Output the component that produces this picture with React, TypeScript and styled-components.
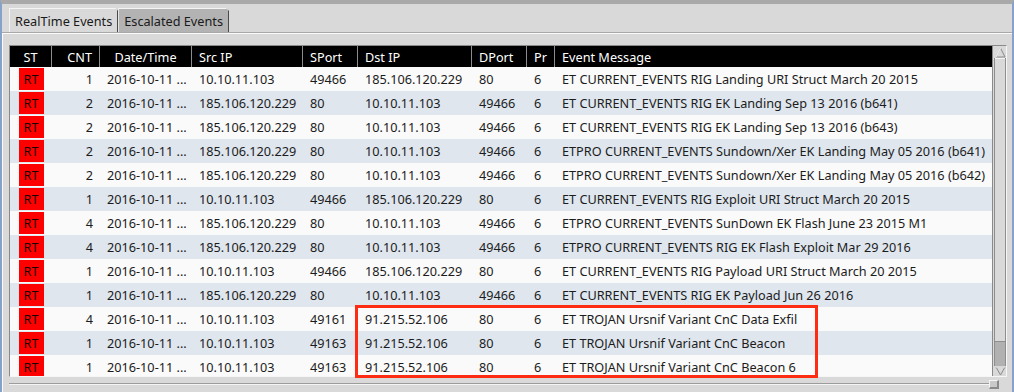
import React, { FunctionComponent } from 'react'
import styled, { createGlobalStyle } from 'styled-components'

const GlobalStyle = createGlobalStyle`
  html, body {
    margin: 0;
    padding: 0;
    background: #d9d9d9;
  }
  body {
    font-family: 'Noto Sans', 'DejaVu Sans', sans-serif;
    font-size: 12.7px;
    color: #1c1c1c;
  }
`

// column widths for header and rows, in px (last one fills)
const COLUMNS = '42px 48px 92px 111px 55px 114px 55px 28px 1fr'

const Window = styled.div`
  position: relative;
  width: 1014px;
  height: 392px;
  box-sizing: border-box;
  border-top: 4px solid #a9a9a9;
  border-left: 2px solid #86a2c8;
  border-right: 2px solid #86a2c8;
  background: #d9d9d9;
  display: flex;
  flex-direction: column;
  overflow: hidden;
`

const TabBar = styled.div`
  height: 30px;
  box-sizing: border-box;
  display: flex;
  align-items: flex-end;
  padding-left: 7px;
  border-bottom: 1px solid #a8a8a8;
`

const Tab = styled.div<{ $active?: boolean }>`
  height: 24px;
  box-sizing: border-box;
  display: flex;
  align-items: center;
  padding: 0 5px 0 5px;
  border-top: 1px solid #f4f4f4;
  border-left: 1px solid #f4f4f4;
  border-right: 1px solid #4a4a4a;
  background: ${p => (p.$active ? '#d9d9d9' : '#b3b3b3')};
  color: #1a1a1a;
  white-space: nowrap;
  clip-path: polygon(0 0, calc(100% - 3px) 0, 100% 3px, 100% 100%, 0 100%);
`

const Panel = styled.div`
  flex: 1;
  display: flex;
  flex-direction: column;
  border-top: 1px solid #fbfbfb;
  border-left: 1px solid #fbfbfb;
  padding: 11px 5px 0 6px;
`

const Frame = styled.div`
  position: relative;
  display: flex;
  height: 332px;
  box-sizing: border-box;
  border-top: 1px solid #8a8a8a;
  border-left: 1px solid #8a8a8a;
  border-right: 1px solid #f6f6f6;
  border-bottom: 1px solid #f6f6f6;
`

const Viewport = styled.div`
  flex: 1;
  overflow: hidden;
  background: #fafafa;
`

const HeaderRow = styled.div`
  display: grid;
  grid-template-columns: ${COLUMNS};
  height: 21px;
  background: #000;
  color: #fff;
`

const HeaderCell = styled.div<{ $align?: 'left' | 'center' | 'right' }>`
  display: flex;
  align-items: center;
  justify-content: ${p => (p.$align === 'center' ? 'center' : p.$align === 'right' ? 'flex-end' : 'flex-start')};
  padding: 0 7px;
  border-right: 1px solid #8c8c8c;
  white-space: nowrap;
  overflow: hidden;
  &:last-child {
    border-right: none;
  }
`

const Row = styled.div<{ $odd: boolean }>`
  display: grid;
  grid-template-columns: ${COLUMNS};
  height: 24px;
  background: ${p => (p.$odd ? '#dfe6ee' : '#fafafa')};
`

const Cell = styled.div<{ $align?: 'left' | 'center' | 'right' }>`
  display: flex;
  align-items: center;
  justify-content: ${p => (p.$align === 'center' ? 'center' : p.$align === 'right' ? 'flex-end' : 'flex-start')};
  padding: 0 7px;
  white-space: nowrap;
  overflow: hidden;
`

const StatusBadge = styled.div`
  width: 25px;
  height: 22px;
  background: #ff0000;
  color: #1a0000;
  display: flex;
  align-items: center;
  justify-content: center;
`

// vertical scrollbar at the right of the table
const VScroll = styled.div`
  width: 14px;
  box-sizing: border-box;
  display: flex;
  flex-direction: column;
  border-left: 1px solid #8a8a8a;
  padding-left: 1px;
  background: #d9d9d9;
`

const ArrowButton = styled.div<{ $h: number }>`
  height: ${p => p.$h}px;
  display: flex;
  align-items: center;
  justify-content: center;
`

const Track = styled.div`
  flex: 1;
  display: flex;
  flex-direction: column;
  border-left: 1px solid #8e8e8e;
  border-right: 1px solid #8e8e8e;
  width: 12px;
  box-sizing: border-box;
  background: #b1b1b1;
`

const Thumb = styled.div`
  height: 284px;
  background: #d9d9d9;
  border-top: 1px solid #f4f4f4;
  border-bottom: 1px solid #8e8e8e;
  box-sizing: border-box;
`

// horizontal scrollbar, mostly below the window edge
const HScroll = styled.div`
  flex: 1;
  display: flex;
  align-items: flex-start;
  padding-top: 3px;
`

const HTrack = styled.div`
  flex: 1;
  margin-top: 3px;
  border-top: 1px solid #9c9c9c;
  box-shadow: inset 0 1px 0 #f4f4f4;
  height: 8px;
`

const HButton = styled.div`
  width: 10px;
  height: 9px;
  margin-right: 8px;
  box-sizing: border-box;
  border-top: 1px solid #f4f4f4;
  border-left: 1px solid #f4f4f4;
  border-right: 2px solid #8a8a8a;
  border-bottom: 2px solid #8a8a8a;
  background: #c9c9c9;
`

// red annotation box drawn over the screenshot
const Highlight = styled.div`
  position: absolute;
  left: 345px;
  top: 259px;
  width: 463px;
  height: 73px;
  box-sizing: border-box;
  border: 3px solid #ff2c14;
  pointer-events: none;
`

const UpArrow: FunctionComponent = () => (
  <svg width='11' height='11' viewBox='0 0 11 11'>
    <polygon points='5.5,1 10,10 1,10' fill='#d9d9d9' stroke='#8a8a8a' strokeWidth='1' />
    <polyline points='1,10 5.5,1' fill='none' stroke='#ffffff' strokeWidth='1' />
  </svg>
)

const DownArrow: FunctionComponent = () => (
  <svg width='11' height='10' viewBox='0 0 11 10'>
    <polygon points='1,1 10,1 5.5,9' fill='#d9d9d9' stroke='#8a8a8a' strokeWidth='1' />
    <polyline points='1,1 10,1' fill='none' stroke='#ffffff' strokeWidth='1' />
  </svg>
)

type Event = [number, string, string, string, string, string, string]

const events: Event[] = [
  [1, '10.10.11.103', '49466', '185.106.120.229', '80', '6', 'ET CURRENT_EVENTS RIG Landing URI Struct March 20 2015'],
  [2, '185.106.120.229', '80', '10.10.11.103', '49466', '6', 'ET CURRENT_EVENTS RIG EK Landing Sep 13 2016 (b641)'],
  [2, '185.106.120.229', '80', '10.10.11.103', '49466', '6', 'ET CURRENT_EVENTS RIG EK Landing Sep 13 2016 (b643)'],
  [2, '185.106.120.229', '80', '10.10.11.103', '49466', '6', 'ETPRO CURRENT_EVENTS Sundown/Xer EK Landing May 05 2016 (b641)'],
  [2, '185.106.120.229', '80', '10.10.11.103', '49466', '6', 'ETPRO CURRENT_EVENTS Sundown/Xer EK Landing May 05 2016 (b642)'],
  [1, '10.10.11.103', '49466', '185.106.120.229', '80', '6', 'ET CURRENT_EVENTS RIG Exploit URI Struct March 20 2015'],
  [4, '185.106.120.229', '80', '10.10.11.103', '49466', '6', 'ETPRO CURRENT_EVENTS SunDown EK Flash June 23 2015 M1'],
  [4, '185.106.120.229', '80', '10.10.11.103', '49466', '6', 'ETPRO CURRENT_EVENTS RIG EK Flash Exploit Mar 29 2016'],
  [1, '10.10.11.103', '49466', '185.106.120.229', '80', '6', 'ET CURRENT_EVENTS RIG Payload URI Struct March 20 2015'],
  [1, '185.106.120.229', '80', '10.10.11.103', '49466', '6', 'ET CURRENT_EVENTS RIG EK Payload Jun 26 2016'],
  [4, '10.10.11.103', '49161', '91.215.52.106', '80', '6', 'ET TROJAN Ursnif Variant CnC Data Exfil'],
  [1, '10.10.11.103', '49163', '91.215.52.106', '80', '6', 'ET TROJAN Ursnif Variant CnC Beacon'],
  [1, '10.10.11.103', '49163', '91.215.52.106', '80', '6', 'ET TROJAN Ursnif Variant CnC Beacon 6'],
]

const App: FunctionComponent = () => (
  <>
    <GlobalStyle />
    <Window>
      <TabBar>
        <Tab $active>RealTime Events</Tab>
        <Tab>Escalated Events</Tab>
      </TabBar>
      <Panel>
        <Frame>
          <Viewport>
            <HeaderRow>
              <HeaderCell $align='center'>ST</HeaderCell>
              <HeaderCell $align='right'>CNT</HeaderCell>
              <HeaderCell $align='center'>Date/Time</HeaderCell>
              <HeaderCell>Src IP</HeaderCell>
              <HeaderCell>SPort</HeaderCell>
              <HeaderCell>Dst IP</HeaderCell>
              <HeaderCell>DPort</HeaderCell>
              <HeaderCell>Pr</HeaderCell>
              <HeaderCell>Event Message</HeaderCell>
            </HeaderRow>
            {events.map(([cnt, src, sport, dst, dport, pr, msg], i) => (
              <Row key={i} $odd={i % 2 === 1}>
                <Cell $align='center'><StatusBadge>RT</StatusBadge></Cell>
                <Cell $align='right'>{cnt}</Cell>
                <Cell>2016-10-11 ...</Cell>
                <Cell>{src}</Cell>
                <Cell>{sport}</Cell>
                <Cell>{dst}</Cell>
                <Cell>{dport}</Cell>
                <Cell>{pr}</Cell>
                <Cell>{msg}</Cell>
              </Row>
            ))}
          </Viewport>
          <VScroll>
            <ArrowButton $h={12}><UpArrow /></ArrowButton>
            <Track>
              <Thumb />
            </Track>
            <ArrowButton $h={10}><DownArrow /></ArrowButton>
          </VScroll>
          <Highlight />
        </Frame>
        <HScroll>
          <HTrack />
          <HButton />
        </HScroll>
      </Panel>
    </Window>
  </>
)

export default App
